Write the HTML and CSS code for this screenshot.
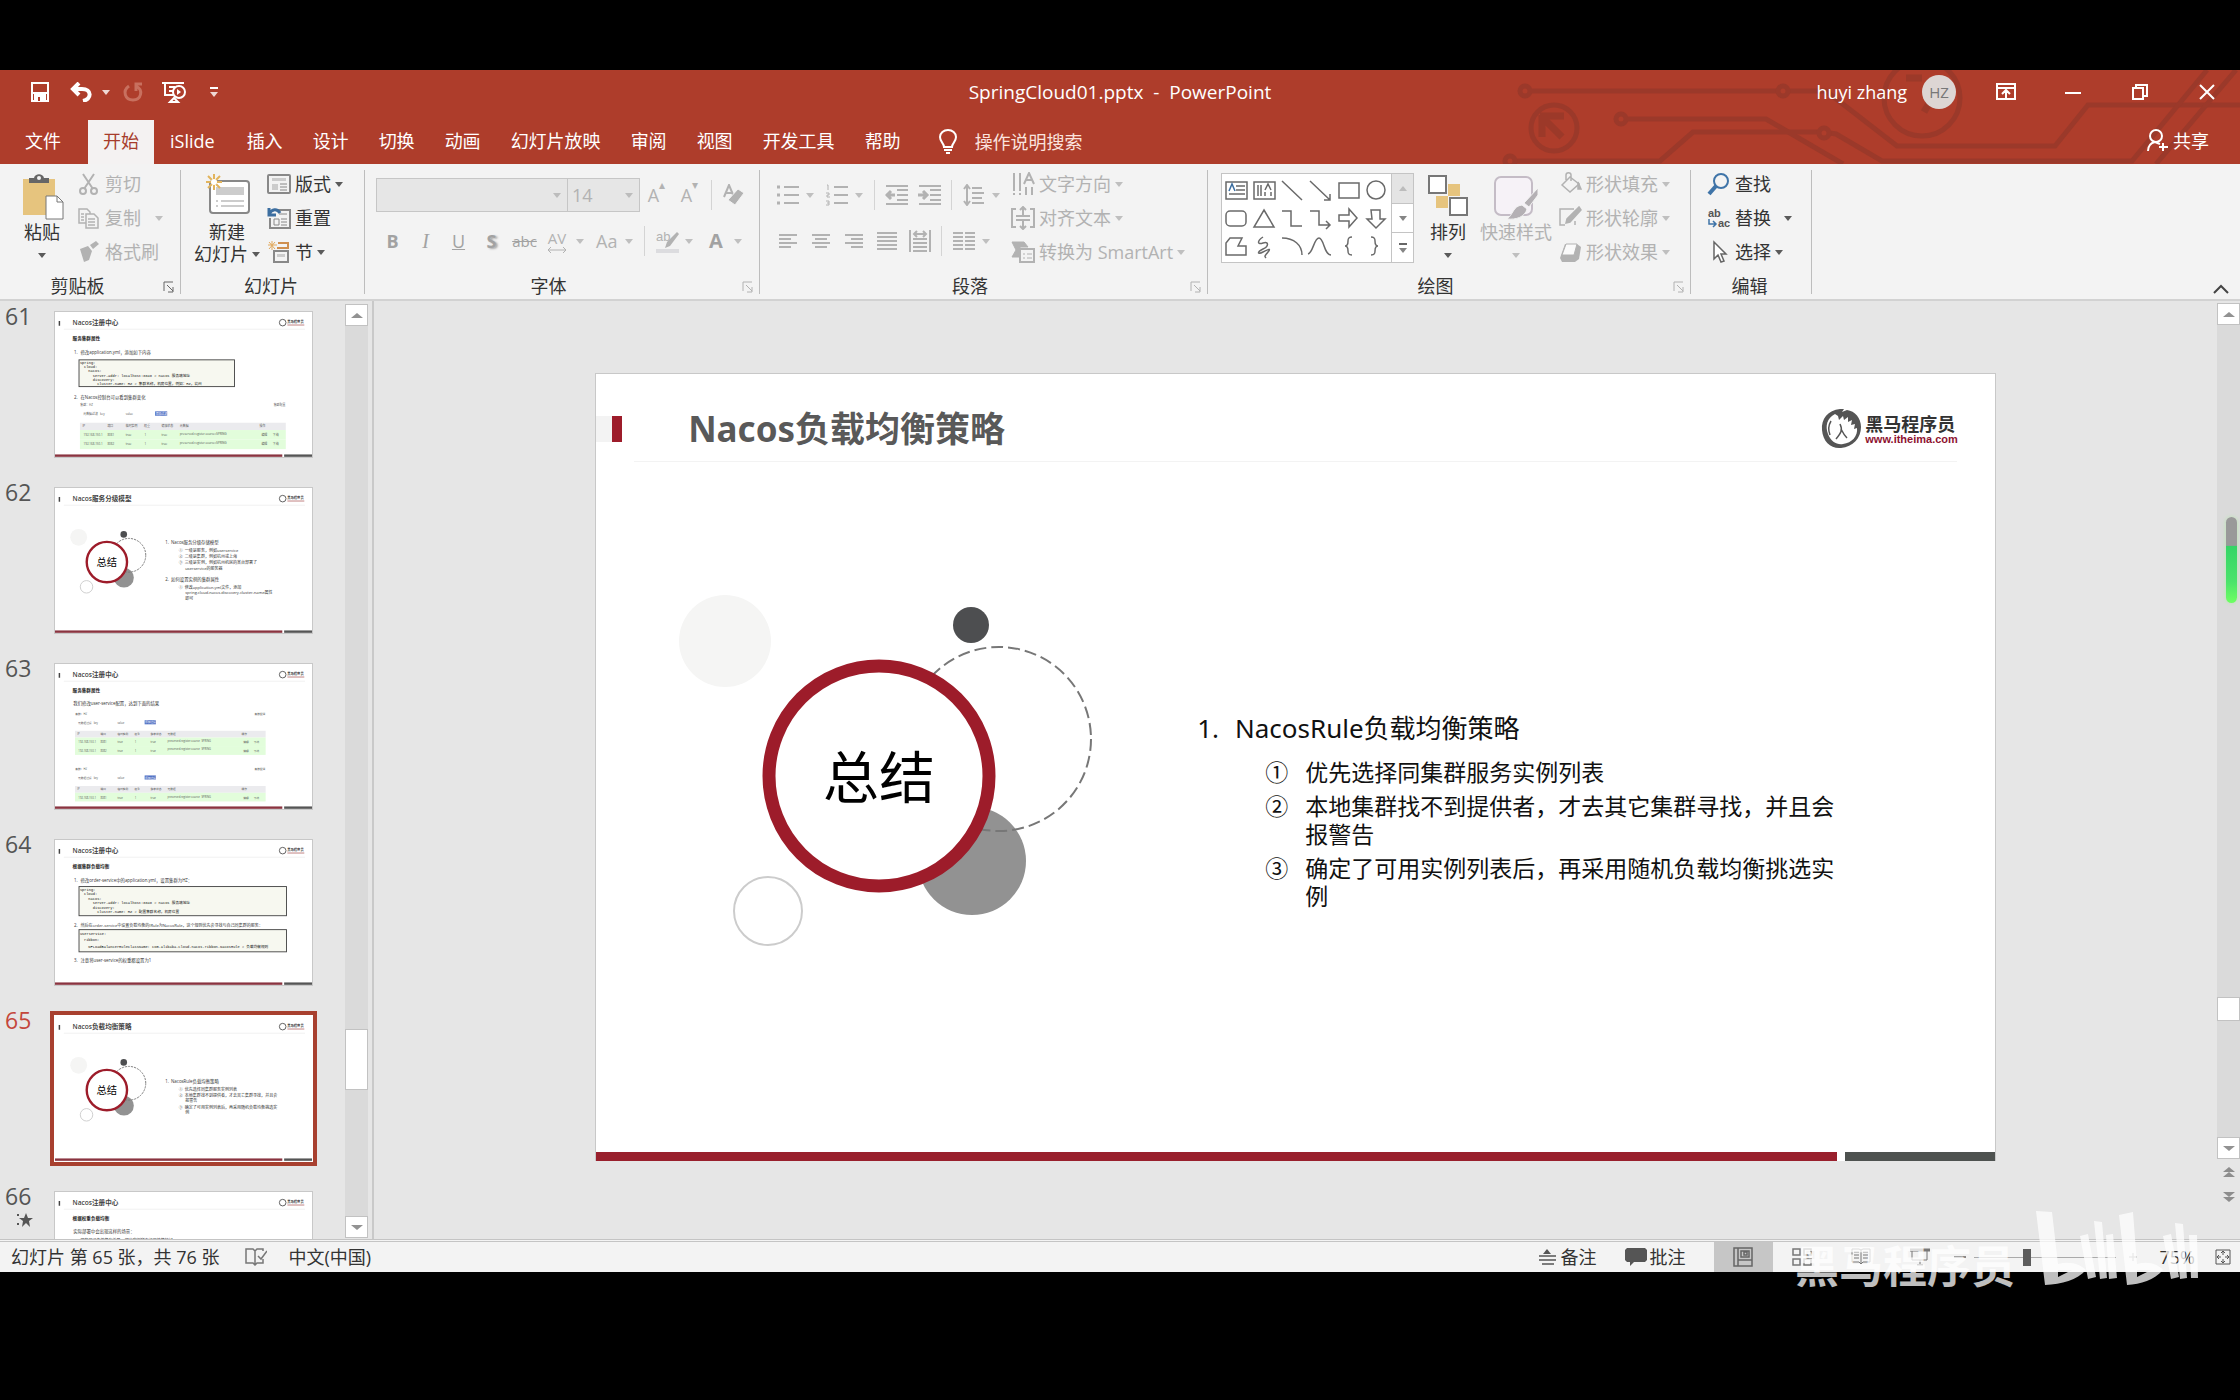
FILE: index.html
```html
<!DOCTYPE html>
<html lang="zh-CN">
<head>
<meta charset="utf-8">
<title>SpringCloud01.pptx - PowerPoint</title>
<link rel="stylesheet" href="styles.css">
</head>
<body>
<svg class="defs" width="0" height="0" aria-hidden="true">
  <defs>
    <!-- 总结 drawing, in slide units (1402 x 789) -->
    <g id="summary-art">
      <circle cx="129" cy="268" r="46" fill="#f5f5f4"/>
      <circle cx="375" cy="252" r="18" fill="#4d4e50"/>
      <circle cx="376" cy="488" r="54" fill="#929292"/>
      <circle class="dash" cx="403" cy="366" r="92" fill="none" stroke="#777" stroke-dasharray="12 5"/>
      <circle class="big-ring" cx="283" cy="403" r="110" fill="#fff" stroke="#9d1c2a" stroke-width="13"/>
      <circle class="ring" cx="172" cy="538" r="34" fill="#fff" stroke="#ccc"/>
      <text class="art-word" x="283" y="425" text-anchor="middle">总结</text>
    </g>
    <g id="horse">
      <path d="M21 2C9 3 2 12 3 23c1 12 9 19 19 18 12-1 20-10 20-21C42 11 36 4 28 3l-5 2 2-3z" fill="#555"/>
      <path d="M16 7C8 11 6 19 9 27c3 8 9 11 15 10 9-1 15-8 14-16l-3 1 1-5-4 1 1-5-4 2v-5l-4 3-1-4-4 4-1-4z" fill="#fff"/>
      <path d="M21 17c3 6 1 9-4 15M22 22c2 4 3 6 6 9M12 14c-3 5-3 9-1 14" fill="none" stroke="#555" stroke-width="1.5"/>
    </g>
    <g id="thumb-chrome">
      <rect x="20" y="48" width="8" height="26" fill="#444"/>
      <path d="M48 93H1364" stroke="#ececec" stroke-width="4"/>
      <circle cx="1242" cy="57" r="18" fill="none" stroke="#555" stroke-width="5"/>
      <text class="t-logo" x="1267" y="60">黑马程序员</text>
      <path d="M1268 70H1360" stroke="#a55" stroke-width="4"/>
      <rect x="0" y="776" width="1240" height="13" fill="#8a3440"/>
      <rect x="1250" y="776" width="152" height="13" fill="#555"/>
    </g>
    <g id="svc-table">
      <text class="t-tiny" x="2" y="16">集群：HZ</text><text class="t-tiny" x="1057" y="16">集群配置</text>
      <text class="t-tiny" x="18" y="66">元数据过滤</text><text class="t-tiny" x="110" y="66">key</text><text class="t-tiny" x="250" y="66">value</text>
      <rect x="410" y="46" width="66" height="24" fill="#4f6fc4"/>
      <text class="t-tiny t-inv" x="412" y="65">添加过滤</text>
      <rect x="0" y="108" width="1123" height="40" fill="#ebebee"/>
      <rect x="0" y="148" width="1123" height="52" fill="#e2fddb"/>
      <text class="t-tiny" x="14" y="134">IP</text><text class="t-tiny" x="150" y="134">端口</text><text class="t-tiny" x="250" y="134">临时实例</text><text class="t-tiny" x="350" y="134">权重</text><text class="t-tiny" x="445" y="134">健康状态</text><text class="t-tiny" x="545" y="134">元数据</text><text class="t-tiny" x="980" y="134">操作</text>
      <text class="t-tiny" x="20" y="182">192.168.150.1</text><text class="t-tiny" x="150" y="182">8081</text><text class="t-tiny" x="250" y="182">true</text><text class="t-tiny" x="352" y="182">1</text><text class="t-tiny" x="445" y="182">true</text><text class="t-tiny" x="545" y="176">preserved.register.source=SPRING</text><text class="t-tiny" x="990" y="182">编辑</text><text class="t-tiny" x="1052" y="182">下线</text>
    </g>
    <g id="svc-row">
      <rect width="1123" height="52" fill="#e2fddb"/>
      <text class="t-tiny" x="20" y="32">192.168.150.1</text><text class="t-tiny" x="150" y="32">8082</text><text class="t-tiny" x="250" y="32">true</text><text class="t-tiny" x="352" y="32">1</text><text class="t-tiny" x="445" y="32">true</text><text class="t-tiny" x="545" y="26">preserved.register.source=SPRING</text><text class="t-tiny" x="990" y="32">编辑</text><text class="t-tiny" x="1052" y="32">下线</text>
    </g>
    <symbol id="launcher" viewBox="0 0 12 12"><path d="M1 10V1h9M4 4l6 6M10 6v5H5" fill="none" stroke="currentColor"/></symbol>
  </defs>
</svg>

<div class="app">
  <header class="top">
    <svg class="circuit" width="760" height="94" viewBox="0 0 760 94" fill="none" stroke="#95382a" aria-hidden="true">
      <g stroke-width="5" opacity=".75">
        <circle cx="45" cy="21" r="5"/><path d="M51 21h247M309 21h37L417 76h158l33-41h152"/><circle cx="303" cy="21" r="5"/>
        <circle cx="141" cy="49" r="5"/><path d="M147 49h139l77 45"/>
        <path d="M36 91h144l33-29h126M350 63l6 1 46 27h250l75-91M676 94l80-94"/><circle cx="344" cy="63" r="5"/><circle cx="30" cy="91" r="5"/>
        <circle cx="74" cy="58" r="23"/><circle cx="442" cy="28" r="38"/>
      </g>
      <path d="M60 46h24M62 45v22M63 48l19 19M426 8h16M458 18l-14 24" stroke-width="7" opacity=".75"/>
    </svg>
    <div class="titlebar">
      <div class="quick">
        <button type="button" class="q save" aria-label="保存"><svg width="20" height="20" viewBox="0 0 20 20" fill="none" stroke="#fff" stroke-width="2"><path d="M2 1h16v18H2z"/><path d="M6 19v-7h8v7" fill="#fff" stroke="none"/><path d="M5 19v-7h10v7M2 11h16"/><path d="M9 15v4" stroke="#ae3d2b"/></svg></button>
        <button type="button" class="q undo" aria-label="撤消"><svg width="24" height="20" viewBox="0 0 24 20" fill="none" stroke="#fff" stroke-width="4"><path d="M9 1L3 7l6 6M3 7h9c10 0 10 10 1 12"/></svg><i class="caret"></i></button>
        <button type="button" class="q redo" aria-label="恢复" disabled><svg width="22" height="20" viewBox="0 0 22 20" fill="none" stroke="#c8705f" stroke-width="3"><path d="M7 4C0 9 3 18 11 18s11-10 3-14M20 2h-6v7"/></svg></button>
        <button type="button" class="q show" aria-label="从头开始"><svg width="26" height="22" viewBox="0 0 26 22" fill="none" stroke="#fff" stroke-width="2"><path d="M1 2h22M4 2v12h8M8 6h6M8 10h4M9 21l4-4 4 4z"/><circle cx="18" cy="11" r="6"/><path d="M16 8v6l4-3z" fill="#fff" stroke="none"/></svg></button>
        <button type="button" class="q more" aria-label="自定义快速访问工具栏"><span class="bar"></span><i class="caret"></i></button>
      </div>
      <div class="doc-title">SpringCloud01.pptx&nbsp; -&nbsp; PowerPoint</div>
      <div class="window">
        <span class="user">huyi zhang</span><span class="avatar">HZ</span>
        <button type="button" aria-label="功能区显示选项"><svg width="20" height="18" viewBox="0 0 20 18" fill="none" stroke="#fff" stroke-width="2"><path d="M1 1h18v15H1zM1 5h18M10 15V8M6 11l4-4 4 4"/></svg></button>
        <button type="button" aria-label="最小化"><svg width="16" height="18" viewBox="0 0 16 18"><path d="M0 10h16" stroke="#fff" stroke-width="2"/></svg></button>
        <button type="button" aria-label="还原"><svg width="16" height="18" viewBox="0 0 16 18" fill="none" stroke="#fff" stroke-width="2"><path d="M1 5h10v11H1zM4 5V2h11v11h-4"/></svg></button>
        <button type="button" aria-label="关闭"><svg width="16" height="18" viewBox="0 0 16 18"><path d="M1 2l14 14M15 2L1 16" stroke="#fff" stroke-width="2"/></svg></button>
      </div>
    </div>
    <nav class="tabs">
      <button type="button" class="file">文件</button><button type="button" class="on">开始</button><button type="button" class="latin">iSlide</button><button type="button">插入</button><button type="button">设计</button><button type="button">切换</button><button type="button">动画</button><button type="button">幻灯片放映</button><button type="button">审阅</button><button type="button">视图</button><button type="button">开发工具</button><button type="button">帮助</button>
      <label class="tell"><svg width="20" height="26" viewBox="0 0 20 26" fill="none" stroke="#fff" stroke-width="2"><path d="M6 18c0-4-4-5-4-10a8 7 0 0 1 16 0c0 5-4 6-4 10zM6 21h8M8 24h4"/></svg><input type="text" placeholder="操作说明搜索" aria-label="操作说明搜索"></label>
      <button type="button" class="share"><svg width="22" height="24" viewBox="0 0 22 24" fill="none" stroke="#fff" stroke-width="2"><ellipse cx="9" cy="7" rx="6" ry="6"/><path d="M1 22c0-5 3-8 7-9l5 2M16 14v8M12 18h9"/></svg>共享</button>
    </nav>
  </header>

  <section class="ribbon">
    <div class="group g1">
      <div class="body">
        <button type="button" class="big"><svg width="44" height="46" viewBox="0 0 44 46"><path d="M3 5h32v36H3z" fill="#e6c47e"/><path d="M9 9V4h5c1-5 9-5 10 0h5v5z" fill="#666"/><circle cx="19" cy="4" r="2" fill="#f3f3f3"/><path d="M26 22h11l6 6v17H26z" fill="#fff" stroke="#777"/><path d="M37 22v6h6" fill="none" stroke="#777"/></svg><span>粘贴</span><i class="caret"></i></button>
        <div class="col">
          <button type="button" class="row" disabled><svg width="24" height="24" viewBox="0 0 24 24" fill="none" stroke="currentColor" stroke-width="2"><path d="M6 2l10 15M17 2L7 17"/><circle cx="6" cy="19" r="3"/><circle cx="17" cy="19" r="3"/></svg>剪切</button>
          <button type="button" class="row" disabled><svg width="24" height="24" viewBox="0 0 24 24" fill="none" stroke="currentColor" stroke-width="1.5"><path d="M2 3h8l3 3v11H2z"/><path d="M9 8h8l4 4v10H9z" fill="#f3f3f3"/><path d="M4 8h3M4 11h3M4 14h3M11 13h7M11 16h7M11 19h7"/></svg>复制<i class="caret far"></i></button>
          <button type="button" class="row" disabled><svg width="24" height="24" viewBox="0 0 24 24" fill="currentColor"><path d="M3 9l8-3 4 5-3 9-5 2zM13 5l3 4 6-5-3-3z"/></svg>格式刷</button>
        </div>
      </div>
      <div class="caption">剪贴板</div><button type="button" class="launch" aria-label="剪贴板设置"><svg width="12" height="12"><use href="#launcher"/></svg></button>
    </div>

    <div class="group g2">
      <div class="body">
        <button type="button" class="big"><svg width="48" height="46" viewBox="0 0 48 46"><rect x="7" y="7" width="39" height="32" rx="3" fill="#fff" stroke="#888" stroke-width="2"/><path d="M13 13h28v8H13z" fill="#ccc"/><path d="M13 27h2M18 27h23M13 32h2M18 32h23" stroke="#999"/><path d="M11 0v16M3 8h16M5 2l12 12M17 2L5 14" stroke="#e2b45c" stroke-width="2"/><circle cx="11" cy="8" r="3" fill="#fff"/></svg><span>新建</span><span class="inline">幻灯片<i class="caret"></i></span></button>
        <div class="col">
          <button type="button" class="row"><svg width="24" height="24" viewBox="0 0 24 24" fill="none" stroke="#888"><rect x="1" y="3" width="22" height="18" rx="1" stroke-width="2"/><path d="M5 6h14v3H5zM5 12h6v6H5z" fill="#ccc" stroke="none"/><path d="M13 12h7M13 15h7M13 18h7"/></svg>版式<i class="caret"></i></button>
          <button type="button" class="row"><svg width="24" height="24" viewBox="0 0 24 24" fill="none" stroke="#888"><path d="M10 4h13v18H3V12" stroke-width="2"/><path d="M12 8h8M7 13h5v6H7zM14 13h6M14 16h6M14 19h6"/><path d="M2 2v7h7M2 8c3-5 8-6 11-1" stroke="#3c6ea0" stroke-width="3"/></svg>重置</button>
          <button type="button" class="row"><svg width="24" height="24" viewBox="0 0 24 24" fill="none" stroke="#888"><path d="M5 1v9M1 5h9M2 2l6 7M8 2L2 9" stroke="#e2a95c"/><path d="M11 3h10v5H10" stroke="#cf8f4f" stroke-width="2"/><path d="M7 11h14v11H7z" stroke-width="2"/><path d="M10 14h8v3h-8z" fill="#ccc" stroke="none"/></svg>节<i class="caret"></i></button>
        </div>
      </div>
      <div class="caption">幻灯片</div>
    </div>

    <div class="group g3">
      <div class="body stack">
        <div class="line">
          <span class="combo wide"><select disabled aria-label="字体"><option></option></select><i class="caret"></i></span><span class="combo"><select disabled aria-label="字号"><option>14</option></select><i class="caret"></i></span>
          <button type="button" class="ic" disabled aria-label="增大字号"><span>A</span><sup>▴</sup></button><button type="button" class="ic" disabled aria-label="减小字号"><span>A</span><sup>▾</sup></button><span class="sep"></span>
          <button type="button" class="ic" disabled aria-label="清除格式"><svg width="22" height="22" viewBox="0 0 22 22"><path d="M1 13L6 1l5 12M3 9h6" fill="none" stroke="currentColor" stroke-width="2"/><path d="M15 5l6 4-9 12-7-5z" fill="currentColor" stroke="#f3f3f3"/></svg></button>
        </div>
        <div class="line">
          <button type="button" class="ic" disabled><b>B</b></button><button type="button" class="ic" disabled><em>I</em></button><button type="button" class="ic" disabled><u>U</u></button><button type="button" class="ic" disabled><b class="shadow">S</b></button><button type="button" class="ic" disabled><s>abc</s></button>
          <button type="button" class="split" disabled><span class="av">AV<svg width="20" height="6" viewBox="0 0 20 6"><path d="M1 3h18M4 0L1 3l3 3M16 0l3 3-3 3" fill="none" stroke="currentColor"/></svg></span><i class="caret"></i></button><button type="button" class="split" disabled>Aa<i class="caret"></i></button><span class="sep"></span>
          <button type="button" class="split" disabled aria-label="突出显示"><svg width="24" height="26" viewBox="0 0 24 26"><text x="0" y="13" class="i-ab">ab</text><path d="M21 4l2 2-9 12-5 2 2-6z" fill="currentColor"/><path d="M0 21h23v4H0z" fill="#dcdcdf"/></svg><i class="caret"></i></button><button type="button" class="split last" disabled><b class="fc">A</b><i class="caret"></i></button>
        </div>
      </div>
      <div class="caption">字体</div><button type="button" class="launch" disabled aria-label="字体设置"><svg width="12" height="12"><use href="#launcher"/></svg></button>
    </div>

    <div class="group g4">
      <div class="body">
        <div class="stack para">
          <div class="line">
            <button type="button" class="split" disabled aria-label="项目符号"><svg width="22" height="22" viewBox="0 0 22 22" stroke="currentColor" stroke-width="2"><path d="M0 3h3M0 11h3M0 19h3" stroke-width="3"/><path d="M7 3h15M7 11h15M7 19h15"/></svg><i class="caret"></i></button><button type="button" class="split" disabled aria-label="编号"><svg width="22" height="22" viewBox="0 0 22 22" stroke="currentColor" stroke-width="2"><path d="M8 3h14M8 11h14M8 19h14"/><path d="M1 1h1v5M0 9h3v2H1v2h3M0 17h3v4H0M1 19h2" fill="none" stroke-width="1"/></svg><i class="caret"></i></button><span class="sep"></span>
            <button type="button" class="ic" disabled aria-label="减少缩进"><svg width="24" height="20" viewBox="0 0 24 20" fill="none" stroke="currentColor" stroke-width="2"><path d="M1 1h22M12 5h11M12 10h11M12 15h11M1 19h22"/><path d="M1 10h9M6 6l-4 4 4 4" stroke-width="3"/></svg></button><button type="button" class="ic" disabled aria-label="增加缩进"><svg width="24" height="20" viewBox="0 0 24 20" fill="none" stroke="currentColor" stroke-width="2"><path d="M1 1h22M12 5h11M12 10h11M12 15h11M1 19h22"/><path d="M0 10h9M5 6l4 4-4 4" stroke-width="3"/></svg></button><span class="sep"></span>
            <button type="button" class="split" disabled aria-label="行距"><svg width="22" height="22" viewBox="0 0 22 22" fill="none" stroke="currentColor" stroke-width="2"><path d="M4 2v18M1 5l3-4 3 4M1 17l3 4 3-4M9 4h10M9 9h12M9 14h10M9 19h12"/></svg><i class="caret"></i></button>
          </div>
          <div class="line">
            <button type="button" class="ic" disabled aria-label="左对齐"><svg width="18" height="16" viewBox="0 0 18 16" stroke="currentColor" stroke-width="2"><path d="M0 2h18M0 6h12M0 10h18M0 14h12"/></svg></button><button type="button" class="ic" disabled aria-label="居中"><svg width="18" height="16" viewBox="0 0 18 16" stroke="currentColor" stroke-width="2"><path d="M0 2h18M3 6h12M0 10h18M3 14h12"/></svg></button><button type="button" class="ic" disabled aria-label="右对齐"><svg width="18" height="16" viewBox="0 0 18 16" stroke="currentColor" stroke-width="2"><path d="M0 2h18M6 6h12M0 10h18M6 14h12"/></svg></button><button type="button" class="ic" disabled aria-label="两端对齐"><svg width="20" height="18" viewBox="0 0 20 18" stroke="currentColor" stroke-width="2"><path d="M0 1h20M0 5h20M0 9h20M0 13h20M0 17h20"/></svg></button><button type="button" class="ic" disabled aria-label="分散对齐"><svg width="22" height="22" viewBox="0 0 22 22" fill="none" stroke="currentColor" stroke-width="2"><path d="M1 0v22M21 0v22M4 9h14M4 13h14M4 17h14M4 21h14M5 4h12M8 1L5 4l3 3M14 1l3 3-3 3"/></svg></button><span class="sep"></span>
            <button type="button" class="split" disabled aria-label="分栏"><svg width="22" height="18" viewBox="0 0 22 18" stroke="currentColor" stroke-width="2"><path d="M0 1h10M0 5h10M0 9h10M0 13h10M0 17h10M12 1h10M12 5h10M12 9h10M12 13h10M12 17h10"/></svg><i class="caret"></i></button>
          </div>
        </div>
        <div class="col">
          <button type="button" class="row" disabled><svg width="24" height="24" viewBox="0 0 24 24" fill="none" stroke="currentColor"><path d="M3 1v22M9 1v22M15 15v8M21 15v8" stroke-width="2" stroke-dasharray="18 2"/><path d="M13 12l5-11 5 11M15 8h6" stroke-width="2"/></svg>文字方向<i class="caret"></i></button>
          <button type="button" class="row" disabled><svg width="24" height="24" viewBox="0 0 24 24" fill="none" stroke="currentColor" stroke-width="2"><path d="M5 3H1v18h4M19 3h4v18h-4M12 1v8M9 4l3-3 3 3M12 15v8M9 20l3 3 3-3M5 10h14M5 14h14"/></svg>对齐文本<i class="caret"></i></button>
          <button type="button" class="row" disabled><svg width="24" height="24" viewBox="0 0 24 24" fill="none" stroke="currentColor"><path d="M1 2h12l4 5H9v10H1l4-7z" fill="currentColor"/><path d="M9 9h14v13H9z" fill="#f3f3f3" stroke-width="2"/><path d="M12 14h2M16 14h5M12 18h2M16 18h5"/></svg>转换为 SmartArt<i class="caret"></i></button>
        </div>
      </div>
      <div class="caption">段落</div><button type="button" class="launch" disabled aria-label="段落设置"><svg width="12" height="12"><use href="#launcher"/></svg></button>
    </div>

    <div class="group g5">
      <div class="body">
        <div class="gallery">
          <svg width="169" height="88" viewBox="0 0 169 88" fill="none" stroke="#6a6a6a" stroke-width="1.5">
            <path d="M4 8h21v17H4z"/><path d="M14 12h9M14 16h9M7 20h16"/><path d="M7 17l3-7 3 7" stroke="#3c6ea0"/>
            <path d="M32 8h21v17H32z"/><path d="M36 11v11M39 11v11M43 18v4M49 18v4M43 16l3-6 3 6"/>
            <path d="M60 7l20 19M88 7l20 19M108 20v6h-6M117 9h20v15h-20z"/><circle cx="154" cy="16" r="9"/>
            <rect x="4" y="37" width="20" height="15" rx="4"/><path d="M42 36l10 17H32zM60 37h9v15h11M88 37h9v14h10M104 47l4 4-4 4M117 41h10v-6l8 9-8 9v-6h-10zM149 36h9v9h5l-9 9-9-9h5z"/>
            <path d="M8 64h12l-4 8h8v9H4V69zM41 63c-6 4-6 8 0 6s6 3 0 6-6 6 0 3 8-4 5 0-4 4-2 6M60 64c12 0 20 7 20 17M86 80c5-1 6-16 11-16s5 17 12 17M130 63c-4 0-4 2-4 4s0 5-3 5c3 0 3 3 3 5s0 4 4 4M149 63c4 0 4 2 4 4s0 5 3 5c-3 0-3 3-3 5s0 4-4 4"/>
          </svg>
          <div class="gscroll"><button type="button" disabled aria-label="上一行"><i class="caret up"></i></button><button type="button" aria-label="下一行"><i class="caret"></i></button><button type="button" aria-label="其他形状"><span class="bar"></span><i class="caret"></i></button></div>
        </div>
        <button type="button" class="big arrange"><svg width="42" height="46" viewBox="0 0 42 46" stroke="#777"><path d="M21 10h12v12H21zM9 22h12v12H9z" fill="#e6c47e" stroke="none"/><path d="M2 2h17v17H2zM23 24h17v17H23z" fill="#fff" stroke-width="2"/></svg><span>排列</span><i class="caret"></i></button>
        <button type="button" class="big styles" disabled><svg width="46" height="46" viewBox="0 0 46 46"><rect x="2" y="3" width="37" height="38" rx="6" fill="#f6f2f7" stroke="#c4bcc6" stroke-width="2"/><path d="M45 14v7l-9 12-5-4zM29 31l5 4c-2 8-11 11-20 10 6-4 6-13 15-14z" fill="#b4b0b4" stroke="#f3f3f3"/></svg><span>快速样式</span><i class="caret"></i></button>
        <div class="col">
          <button type="button" class="row" disabled><svg width="24" height="24" viewBox="0 0 24 24" fill="none" stroke="currentColor" stroke-width="1.5"><path d="M4 13l8-8 9 7-9 8zM8 8V3c0-3 5-3 5 0v6"/><path d="M20 10l3 7h-3z" fill="currentColor"/></svg>形状填充<i class="caret"></i></button>
          <button type="button" class="row" disabled><svg width="24" height="24" viewBox="0 0 24 24" fill="none" stroke="currentColor" stroke-width="1.5"><path d="M16 3H2v16h5M17 15v4"/><path d="M21 1l2 3-11 12-4 1 1-4z" fill="currentColor"/></svg>形状轮廓<i class="caret"></i></button>
          <button type="button" class="row" disabled><svg width="24" height="24" viewBox="0 0 24 24"><path d="M7 4h12l4 3-2 12-4 3H4l-2-4z" fill="currentColor"/><path d="M8 4h11l-3 11H4z" fill="#fafafa" stroke="currentColor"/></svg>形状效果<i class="caret"></i></button>
        </div>
      </div>
      <div class="caption">绘图</div><button type="button" class="launch" disabled aria-label="绘图设置"><svg width="12" height="12"><use href="#launcher"/></svg></button>
    </div>

    <div class="group g6">
      <div class="body">
        <div class="col">
          <button type="button" class="row"><svg width="24" height="24" viewBox="0 0 24 24" fill="none" stroke="#3f74a8"><circle cx="14" cy="9" r="7" stroke-width="2"/><path d="M9 14l-7 8" stroke-width="4"/></svg>查找</button>
          <button type="button" class="row"><svg width="24" height="24" viewBox="0 0 24 24"><text x="1" y="11" class="i-rep">ab</text><text x="11" y="21" class="i-rep">ac</text><path d="M2 13v5h6M6 15l3 3-3 3" fill="none" stroke="#3f74a8" stroke-width="1.5"/></svg>替换<i class="caret mid"></i></button>
          <button type="button" class="row"><svg width="24" height="24" viewBox="0 0 24 24"><path d="M7 2v17l4-4 3 7 3-1-3-7h5z" fill="#fff" stroke="#666" stroke-width="1.5"/></svg>选择<i class="caret"></i></button>
        </div>
      </div>
      <div class="caption">编辑</div>
    </div>
    <button type="button" class="collapse" aria-label="折叠功能区"><svg width="18" height="12" viewBox="0 0 18 12"><path d="M2 10l7-7 7 7" fill="none" stroke="#444" stroke-width="2"/></svg></button>
  </section>

  <main class="work">
    <aside class="thumbs">
      <ol class="list">
        <li><span class="no">61</span><a href="#s61" class="thumb" aria-label="幻灯片 61"><svg viewBox="0 0 1402 789"><use href="#thumb-chrome"/>
          <text class="t-title" x="96" y="70">Nacos注册中心</text><text class="t-sub" x="96" y="150">服务集群属性</text>
          <text class="t-p" x="103" y="227">1.</text><text class="t-p" x="139" y="227">修改application.yml，添加如下内容</text>
          <rect x="131" y="260" width="848" height="146" class="t-box"/>
          <text class="t-code" x="136" y="284">spring:</text><text class="t-code" x="158" y="306">cloud:</text><text class="t-code" x="182" y="328">nacos:</text><text class="t-code" x="206" y="352">server-addr: localhost:8848 # nacos 服务端地址</text><text class="t-code" x="206" y="374">discovery:</text><text class="t-code" x="230" y="397">cluster-name: HZ # 集群名称，机房位置，例如：HZ，杭州</text>
          <text class="t-p" x="103" y="476">2.</text><text class="t-p" x="139" y="476">在Nacos控制台可以看到集群变化</text>
          <use href="#svc-table" x="136" y="495"/><use href="#svc-row" x="136" y="695"/></svg></a></li>
        <li><span class="no">62</span><a href="#s62" class="thumb" aria-label="幻灯片 62"><svg viewBox="0 0 1402 789" class="thin"><use href="#thumb-chrome"/><use href="#summary-art"/>
          <text class="t-title" x="96" y="70">Nacos服务分级模型</text>
          <text class="t-p" x="601" y="306">1.  Nacos服务分级存储模型</text><text class="t-s" x="675" y="348">①  一级是服务，例如userservice</text><text class="t-s" x="675" y="381">②  二级是集群，例如杭州或上海</text><text class="t-s" x="675" y="413">③  三级是实例，例如杭州机房的某台部署了</text><text class="t-s" x="710" y="444">userservice的服务器</text>
          <text class="t-p" x="601" y="507">2.  如何设置实例的集群属性</text><text class="t-s" x="675" y="551">①  修改application.yml文件，添加</text><text class="t-s" x="710" y="578">spring.cloud.nacos.discovery.cluster-name属性</text><text class="t-s" x="710" y="611">即可</text></svg></a></li>
        <li><span class="no">63</span><a href="#s63" class="thumb" aria-label="幻灯片 63"><svg viewBox="0 0 1402 789"><use href="#thumb-chrome"/>
          <text class="t-title" x="96" y="70">Nacos注册中心</text><text class="t-sub" x="96" y="150">服务集群属性</text><text class="t-p" x="100" y="225">我们修改user-service配置，达到下面的结果</text>
          <svg x="109" y="263" width="1041" height="232" viewBox="0 0 1123 250"><use href="#svc-table"/><use href="#svc-row" y="198"/></svg>
          <svg x="109" y="564" width="1041" height="186" viewBox="0 0 1123 200"><use href="#svc-table"/></svg></svg></a></li>
        <li><span class="no">64</span><a href="#s64" class="thumb" aria-label="幻灯片 64"><svg viewBox="0 0 1402 789"><use href="#thumb-chrome"/>
          <text class="t-title" x="96" y="70">Nacos注册中心</text><text class="t-sub" x="96" y="150">根据集群负载均衡</text>
          <text class="t-p" x="103" y="226">1.</text><text class="t-p" x="139" y="226">修改order-service中的application.yml，设置集群为HZ：</text>
          <rect x="131" y="253" width="1132" height="159" class="t-box"/>
          <text class="t-code" x="136" y="275">spring:</text><text class="t-code" x="158" y="300">cloud:</text><text class="t-code" x="182" y="325">nacos:</text><text class="t-code" x="206" y="350">server-addr: localhost:8848 # nacos 服务端地址</text><text class="t-code" x="206" y="375">discovery:</text><text class="t-code" x="230" y="400">cluster-name: HZ # 配置集群名称，机房位置</text>
          <text class="t-p" x="103" y="473">2.</text><text class="t-s" x="139" y="473">然后在order-service中设置负载均衡的IRule为NacosRule，这个规则优先会寻找与自己同集群的服务：</text>
          <rect x="131" y="488" width="1132" height="121" class="t-box"/>
          <text class="t-code" x="136" y="516">userservice:</text><text class="t-code" x="158" y="552">ribbon:</text><text class="t-code" x="182" y="590">NFLoadBalancerRuleClassName: com.alibaba.cloud.nacos.ribbon.NacosRule # 负载均衡规则</text>
          <text class="t-p" x="103" y="663">3.</text><text class="t-p" x="139" y="663">注意将user-service的权重都设置为1</text></svg></a></li>
        <li class="current"><span class="no">65</span><a href="#s65" class="thumb" aria-label="幻灯片 65" aria-current="true"><svg viewBox="0 0 1402 789" class="thin"><use href="#thumb-chrome"/><use href="#summary-art"/>
          <text class="t-title" x="96" y="70">Nacos负载均衡策略</text>
          <text class="t-p" x="601" y="366">1.  NacosRule负载均衡策略</text><text class="t-s" x="675" y="408">①  优先选择同集群服务实例列表</text><text class="t-s" x="675" y="441">②  本地集群找不到提供者，才去其它集群寻找，并且会</text><text class="t-s" x="710" y="470">报警告</text><text class="t-s" x="675" y="504">③  确定了可用实例列表后，再采用随机负载均衡挑选实</text><text class="t-s" x="710" y="533">例</text></svg></a></li>
        <li><span class="no">66<svg class="star" width="16" height="14" viewBox="0 0 16 14"><path d="M9 0l2 5h5l-4 3 1 6-4-4-4 4 1-6-4-3h5zM0 1h2v2H0zM0 10h2v2H0z" fill="#555"/></svg></span><a href="#s66" class="thumb" aria-label="幻灯片 66"><svg viewBox="0 0 1402 789"><use href="#thumb-chrome"/>
          <text class="t-title" x="96" y="70">Nacos注册中心</text><text class="t-sub" x="96" y="150">根据权重负载均衡</text><text class="t-p" x="100" y="225">实际部署中会出现这样的场景：</text><text class="t-s" x="139" y="270">服务器设备性能有差异，部分实例所在机器性能较好</text></svg></a></li>
      </ol>
      <div class="vscroll"><button type="button" aria-label="向上滚动"><i class="caret up"></i></button><span class="handle"></span><button type="button" aria-label="向下滚动"><i class="caret"></i></button></div>
    </aside>

    <section class="stage">
      <article class="slide" id="s65">
        <header class="slide-head">
          <span class="mark"></span><h1>Nacos负载均衡策略</h1>
          <div class="logo"><svg width="45" height="44" viewBox="0 0 45 44"><use href="#horse"/></svg><div><strong>黑马程序员</strong><span>www.itheima.com</span></div></div>
        </header>
        <div class="slide-body">
          <svg class="art" viewBox="66 208 446 380"><use href="#summary-art"/></svg>
          <div class="points">
            <div class="point"><span>1.</span><span>NacosRule负载均衡策略</span></div>
            <div class="sub"><span>①</span><span>优先选择同集群服务实例列表</span></div>
            <div class="sub"><span>②</span><span>本地集群找不到提供者，才去其它集群寻找，并且会报警告</span></div>
            <div class="sub"><span>③</span><span>确定了可用实例列表后，再采用随机负载均衡挑选实例</span></div>
          </div>
        </div>
        <footer class="slide-foot"><span class="red"></span><span class="dark"></span></footer>
      </article>
    </section>

    <div class="rscroll">
      <div class="vscroll"><button type="button" aria-label="向上滚动"><i class="caret up"></i></button><span class="handle"></span><button type="button" aria-label="向下滚动"><i class="caret"></i></button></div>
      <button type="button" class="jump" aria-label="上一张幻灯片"><i class="caret up"></i><i class="caret up"></i></button><button type="button" class="jump" aria-label="下一张幻灯片"><i class="caret"></i><i class="caret"></i></button>
      <span class="level"></span>
    </div>
  </main>

  <footer class="status">
    <span class="page">幻灯片 第 65 张，共 76 张</span>
    <svg class="book" width="22" height="18" viewBox="0 0 22 18" fill="none" stroke="#777" stroke-width="1.5"><path d="M10 3v14M10 3L8 1H1v14h7l2 2 2-2h6v-4M10 3l2-2h6v2M13 8l3 3 6-8"/></svg>
    <span class="lang">中文(中国)</span>
    <button type="button" class="notes"><svg width="17" height="16" viewBox="0 0 17 16"><path d="M8 0l4 5H4z" fill="#555"/><path d="M0 7h17M0 11h17M3 15h12" stroke="#555" stroke-width="1.5"/></svg>备注</button>
    <button type="button" class="comments"><svg width="22" height="18" viewBox="0 0 22 18"><path d="M2 0h18l2 2v10l-2 2H9l-4 4v-4H2l-2-2V2z" fill="#555"/></svg>批注</button>
    <button type="button" class="view on" aria-label="普通视图"><svg width="20" height="20" viewBox="0 0 20 20" fill="none" stroke="#666" stroke-width="1.5"><path d="M1 1h18v18H1zM5 1v18M5 13h14M8 4h8v6H8zM11 5h3v3h-3z"/></svg></button>
    <button type="button" class="view" aria-label="幻灯片浏览"><svg width="20" height="18" viewBox="0 0 20 18" fill="none" stroke="#777" stroke-width="1.5"><path d="M1 1h7v6H1zM12 1h7v6h-7zM1 11h7v6H1zM12 11h7v6h-7z"/></svg></button>
    <button type="button" class="view" aria-label="阅读视图"><svg width="20" height="18" viewBox="0 0 20 18" fill="none" stroke="#777"><path d="M10 2v14M1 1h7l2 1 2-1h7v13h-7l-2 2-2-2H1zM3 4h5M3 7h5M3 10h5M12 4h5M12 7h5M12 10h5"/></svg></button>
    <button type="button" class="view" aria-label="幻灯片放映"><svg width="20" height="18" viewBox="0 0 20 18" fill="none" stroke="#777"><path d="M0 2h20" stroke-width="3"/><path d="M2 3v9h15V3M10 12v4M7 17h6"/></svg></button>
    <button type="button" class="sign" aria-label="缩小"><svg width="12" height="12" viewBox="0 0 12 12"><path d="M0 6h12" stroke="#666" stroke-width="1.5"/></svg></button>
    <input class="zoom" type="range" min="0" max="100" value="37" aria-label="显示比例">
    <button type="button" class="sign" aria-label="放大"><svg width="8" height="12" viewBox="0 0 8 12"><path d="M0 6h8M4 2v8" stroke="#999" stroke-width="1"/></svg></button>
    <span class="pct">75%</span>
    <button type="button" class="fit" aria-label="适应窗口"><svg width="16" height="16" viewBox="0 0 16 16" fill="none" stroke="#555"><path d="M1 1h14v14H1z"/><path d="M8 2v4M8 10v4M2 8h4M10 8h4M6 4l2-2 2 2M6 12l2 2 2-2M4 6L2 8l2 2M12 6l2 2-2 2"/></svg></button>
  </footer>

  <div class="watermark" aria-hidden="true"><span>黑马程序员</span>
    <svg width="166" height="78" viewBox="0 0 166 78" fill="#fff" fill-rule="evenodd"><path d="M1 0l16 1 6 52c12-3 22 0 28 6-9 10-24 14-41 15zM23 59h14l-14 7zM45 25l8-2 8 43-8 2zM59 10l8 1 5 56-7 1zM71 24l7-1 4 44-8 1zM84 4l14-3 4 52c11-3 21 0 26 6-9 10-22 14-36 15zM102 59h14l-14 7zM128 25l8-2 8 43-8 2zM140 12l8 1 4 54-7 1zM154 24h8l1 43h-7z"/></svg>
  </div>
</div>
</body>
</html>
```
FILE: styles.css
```css
* { box-sizing: border-box; }
body { margin: 0; background: #000; color: #333; font: 18px/22px "Open Sans", "Noto Sans CJK SC", sans-serif; }
button, input, select { margin: 0; padding: 0; border: 0; background: none; color: inherit; font: inherit; }
button { display: flex; align-items: center; justify-content: center; white-space: nowrap; }
button:disabled { color: #b2b2b2; }
svg { display: block; flex: none; }
.defs { position: absolute; }
.app { position: relative; display: flex; flex-direction: column; height: 100vh; padding: 70px 0 128px; }

.caret { width: 0; height: 0; border: 4px solid transparent; border-top: 5px solid currentColor; border-bottom: 0; flex: none; opacity: .8; }
.caret.up { border-top: 0; border-bottom: 5px solid currentColor; }
.bar { width: 8px; height: 2px; background: currentColor; }

/* title bar and tabs */
.top { position: relative; background: #ae3d2b; color: #fff; flex: none; }
.circuit { position: absolute; right: 0; top: 0; }
.titlebar { position: relative; display: grid; grid-template-columns: 1fr auto 1fr; align-items: center; height: 50px; padding-bottom: 6px; }
.quick { display: flex; align-items: center; padding-left: 30px; }
.quick .undo { margin-left: 20px; gap: 8px; }
.quick .redo { margin-left: 12px; }
.quick .show { margin-left: 17px; }
.quick .more { margin-left: 23px; flex-direction: column; gap: 3px; }
.doc-title { font-size: 19px; }
.window { display: flex; align-items: center; justify-content: flex-end; }
.window button { width: 67px; height: 40px; }
.avatar { width: 34px; height: 34px; margin: 0 16px 0 15px; border-radius: 50%; background: #ddd6d4; color: #777; font-size: 15px; line-height: 34px; text-align: center; }
.tabs { position: relative; display: flex; height: 44px; padding-left: 10px; }
.tabs button { padding: 0 15px 2px; }
.tabs .file { padding-right: 27px; }
.tabs .latin { padding-left: 16px; padding-right: 17px; }
.tabs .on { background: #f4f2f2; color: #a63c2c; }
.tell { display: flex; align-items: center; gap: 17px; margin-left: 22px; }
.tell input { width: 140px; }
.tell input::placeholder { color: #fbe3de; opacity: 1; }
.tabs .share { margin-left: auto; padding-right: 31px; gap: 4px; }

/* ribbon */
.ribbon { display: flex; flex: none; height: 137px; padding-top: 4px; background: #f3f3f3; border-bottom: 2px solid #d2d2d2; }
.group { position: relative; background: linear-gradient(#bdbdbd, #bdbdbd) right 2px / 1px 124px no-repeat; }
.body { display: flex; height: 102px; }
.caption { padding-top: 5px; text-align: center; }
.launch { position: absolute; right: 6px; bottom: 6px; color: #666; }
.g1 { width: 181px; } .g2 { width: 184px; } .g3 { width: 395px; } .g4 { width: 448px; } .g5 { width: 483px; } .g6 { width: 121px; }
.g1 .caption { padding-right: 26px; }
.g2 .caption, .g6 .caption { padding-right: 4px; }
.g3 .caption, .g4 .caption, .g5 .caption { padding-right: 28px; }
.big { flex-direction: column; justify-content: flex-start; padding-top: 6px; }
.big svg { margin-bottom: 1px; }
.big .inline { display: flex; align-items: center; gap: 4px; }
.big > .caret { margin-top: 10px; }
.g1 .big { width: 60px; margin: 0 5px 0 12px; }
.g2 .big { width: 70px; margin: 0 5px 0 11px; }
.col { display: flex; flex-direction: column; align-items: flex-start; }
.row { height: 34px; padding-bottom: 2px; gap: 4px; }
.row .far { margin-left: 10px; }
.row .mid { margin-left: 9px; }
.stack { flex-direction: column; padding-top: 10px; }
.g3 .stack { padding-left: 11px; }
.line { display: flex; align-items: center; height: 34px; margin-bottom: 12px; }
.combo { position: relative; display: flex; width: 73px; height: 34px; margin-left: -1px; border: 1px solid #c6c6c6; background: #e6e6e6; color: #b2b2b2; }
.combo.wide { width: 192px; margin-left: 0; }
.combo select { width: 100%; padding-left: 4px; appearance: none; opacity: 1; color: #b2b2b2; }
.combo .caret { position: absolute; right: 6px; top: 14px; }
.ic { width: 33px; height: 34px; }
.ic sup { align-self: flex-start; font-size: 12px; line-height: 14px; }
.ic s { font-size: 15px; }
.ic em { font-family: "Liberation Serif", serif; font-size: 20px; }
.line b, .line em, .line u, .line s { color: #a2a2a2; }
.shadow { text-shadow: 2px 1px 2px #aaa; }
.split { width: 49px; height: 34px; padding: 0 6px; justify-content: space-between; }
.split .av { display: flex; flex-direction: column; font-size: 15px; line-height: 17px; }
.split.last { padding-left: 10px; }
.fc { font-size: 20px; }
.i-ab { font: 13px "Liberation Sans", sans-serif; fill: currentColor; }
.i-rep { font: bold 11px "Liberation Sans", sans-serif; fill: #555; }
.sep { width: 1px; height: 30px; margin: 0 5px; background: #d4d4d4; }
.para { width: 240px; margin-left: 11px; }
.gallery { display: flex; width: 193px; height: 90px; margin: 5px 0 0 13px; border: 1px solid #c4c4c4; background: #fff; }
.gscroll { display: flex; flex-direction: column; flex: 1; border-left: 1px solid #c4c4c4; color: #666; }
.gscroll button { flex: 1; flex-direction: column; gap: 3px; border-bottom: 1px solid #c4c4c4; }
.gscroll button:disabled { background: #e4e4e4; }
.gscroll button:last-child { border-bottom: 0; }
.arrange { width: 60px; margin-left: 4px; }
.styles { width: 74px; margin: 0 5px 0 1px; }
.g6 .col { padding-left: 16px; }
.collapse { align-self: flex-end; margin: 0 10px 4px auto; }

/* work area */
.work { display: flex; flex: 1; min-height: 0; background: #e6e6e6; }
.thumbs { display: flex; width: 374px; height: 100%; overflow: hidden; border-right: 2px solid #c9c9c9; }
.list { display: flex; flex-direction: column; gap: 30px; width: 345px; margin: 0; padding: 10px 0 0 5px; list-style: none; }
.list li { display: flex; height: 146px; flex: none; }
.no { width: 49px; font-size: 23px; line-height: 10px; color: #555; }
.current .no { color: #c4473c; }
.star { margin: 12px 0 0 12px; }
.thumb { width: 259px; height: 147px; border: 1px solid #c8c8c8; background: #fff; }
.thumb > svg { width: 100%; height: 100%; }
.current .thumb { outline: 4px solid #a8402f; border-color: #fff; }
.thin { --hairline: 5px; }
.dash, .ring { stroke-width: var(--hairline, 2px); }
.t-title { font: 600 36px "Open Sans", "Noto Sans CJK SC", sans-serif; fill: #444; }
.t-sub { font: bold 25px "Noto Sans CJK SC", sans-serif; fill: #222; }
.t-p { font: 24px "Open Sans", "Noto Sans CJK SC", sans-serif; fill: #333; white-space: pre; }
.t-s { font: 22px "Open Sans", "Noto Sans CJK SC", sans-serif; fill: #333; white-space: pre; }
.t-code { font: 20px "Liberation Mono", "Noto Sans CJK SC", monospace; fill: #111; }
.t-tiny { font: 16px "Open Sans", "Noto Sans CJK SC", sans-serif; fill: #555; }
.t-inv { fill: #fff; }
.t-logo { font: bold 18px "Noto Sans CJK SC", sans-serif; fill: #333; }
.t-box { fill: #f7f8f0; stroke: #444; stroke-width: 5px; }
.art-word { font: 56px "Noto Sans CJK SC", sans-serif; fill: #000; }

.vscroll { display: flex; flex-direction: column; width: 23px; background: #dadada; color: #777; }
.vscroll button, .handle { height: 22px; flex: none; border: 1px solid #c2c2c2; background: #fff; }
.vscroll .caret { border-left-width: 6px; border-right-width: 6px; }
.thumbs .vscroll { flex: none; margin: 3px 0 1px; }
.thumbs .handle { height: 61px; margin: auto 0 126px; }

.stage { flex: 1; padding-top: 72px; }
.slide { display: flex; flex-direction: column; width: 76%; aspect-ratio: 1402 / 789; margin: 0 auto; border: 1px solid #c8c8c8; border-bottom: 0; background: #fff; }
.slide-head { display: flex; align-items: center; height: 88px; padding: 22px 37px 0 0; background: linear-gradient(#f3f3f3, #f3f3f3) 38px 87px / calc(100% - 76px) 1px no-repeat; }
.mark { width: 26px; height: 26px; border-left: 16px solid #f3f3f3; background: #9d1c2a; }
.slide-head h1 { flex: 1; margin: 0 0 0 66px; color: #595959; font: bold 35px/44px "Noto Sans", "Noto Sans CJK SC", sans-serif; }
.logo { display: flex; align-items: center; gap: 1px; }
.logo div { display: flex; flex-direction: column; }
.logo strong { color: #333; font: bold 18px/20px "Noto Sans CJK SC", sans-serif; }
.logo span { color: #8e1230; font: bold 11px/13px "Liberation Sans", sans-serif; }
.slide-body { display: flex; flex: 1; padding: 119px 0 0 66px; }
.art { width: 446px; height: 380px; }
.points { width: 650px; margin: 131px 0 0 89px; color: #111; font-size: 23px; line-height: 28px; font-family: "Noto Sans", "Noto Sans CJK SC", sans-serif; }
.point { display: flex; gap: 16px; margin-bottom: 14px; font-size: 26px; line-height: 32px; }
.sub { display: flex; gap: 17px; margin-bottom: 6px; padding-left: 68px; }
.sub span:last-child { width: 530px; }
.slide-foot { display: flex; gap: 8px; height: 9px; }
.slide-foot .red { flex: 1; background: #99202d; }
.slide-foot .dark { width: 150px; background: #4e5250; }

.rscroll { position: relative; display: flex; flex-direction: column; width: 23px; padding: 2px 0 30px; }
.rscroll .vscroll { flex: 1; }
.rscroll .handle { height: 24px; margin: auto 0 116px; }
.jump { flex-direction: column; height: 25px; color: #777; }
.jump .caret { border-left-width: 6px; border-right-width: 6px; }
.level { position: absolute; right: 3px; top: 216px; width: 11px; height: 86px; border-radius: 6px; background: linear-gradient(#999 33%, #35d566 34%, #4be36b 75%, #6eff62); box-shadow: 0 0 4px #b8e8b0; }

/* status bar */
.status { display: flex; align-items: center; flex: none; height: 33px; padding-right: 9px; border-top: 3px double #c4c4c4; background: #f3f3f3; }
.page { margin-left: 11px; }
.book { margin-left: 25px; }
.lang { margin: 0 auto 0 22px; }
.notes { gap: 5px; }
.comments { gap: 3px; margin: 0 28px; }
.view { width: 59px; height: 30px; }
.view.on { background: #c6c6c6; }
.sign { width: 14px; margin-left: 3px; }
.zoom { width: 142px; height: 16px; margin: 0 7px; appearance: none; background: linear-gradient(#aaa, #aaa) center / 100% 1px no-repeat; }
.zoom::-webkit-slider-thumb { appearance: none; width: 8px; height: 17px; background: #5c5c5c; }
.pct { margin-left: 20px; }
.fit { margin-left: 20px; }

.watermark { position: absolute; right: 39px; bottom: 111px; display: flex; align-items: flex-end; gap: 20px; opacity: .75; pointer-events: none; }
.watermark span { color: #fff; font: bold 44px/50px "Noto Sans CJK SC", sans-serif; }
```
